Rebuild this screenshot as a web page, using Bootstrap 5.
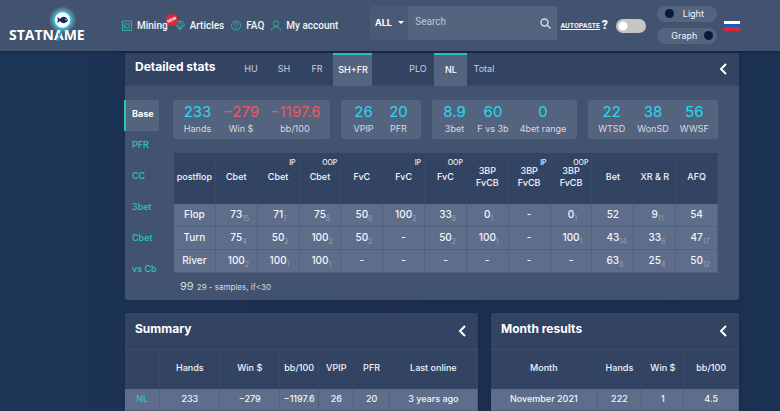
<!DOCTYPE html>
<html lang="en">
<head>
<meta charset="utf-8">
<meta name="viewport" content="width=device-width, initial-scale=1">
<title>Statname</title>
<link href="https://cdn.jsdelivr.net/npm/bootstrap@5.3.0/dist/css/bootstrap.min.css" rel="stylesheet">
<style>
body{font-family:Inter,"Liberation Sans",sans-serif;font-size:10px;line-height:14px;color:#f2f5fa;background:linear-gradient(90deg,#1c3557,#1e2f50 50%,#1a3253);overflow-x:hidden}
a{color:inherit;text-decoration:none}
button,input{font:inherit}
h2{font-size:12px;line-height:16px;font-weight:700;margin:0;color:#fff}
.topbar{height:51px;background:#42536f;box-shadow:0 1px 2px #14233f;padding-left:9px;padding-right:41px;position:relative;z-index:2}
.logo{width:80px;height:40px;margin-right:33px}
.logo text{font:700 14px "Open Sans",sans-serif;fill:#fff}
.topnav{gap:7px;font:500 10px/14px Roboto,sans-serif}
.topnav a{display:flex;align-items:center;gap:5px;white-space:nowrap}
.topnav svg{width:10px;height:11px;stroke:#2fae9f;fill:none;stroke-width:1}
.newtag{position:absolute;right:-10px;top:-5px;width:12px;height:12px;border-radius:50%;background:#d9293a;color:#fff;font:700 4px/12px Inter,sans-serif;text-align:center;transform:rotate(-25deg)}
.searchbox{margin-left:32px;width:187px;height:34px;margin-bottom:5px;border-radius:4px;background:#4a5a74}
.searchbox .pick{width:43px;border:0;background:none;color:#fff;font-weight:700;font-size:9px}
.searchbox .pick::after{margin-left:6px;vertical-align:2px;border-width:3px 3px 0}
.searchbox input{background:#54637e;border:0;color:#fff;padding:0 0 2px 7px;min-width:0;outline:0;font-family:Roboto,sans-serif}
.searchbox input::placeholder{color:#bdc7d7;opacity:1}
.searchbox .go{border:0;background:#54637e;width:28px;padding:0 0 2px;border-radius:0 2px 2px 0}
.autop{margin-left:3px;font:700 7px/10px "Roboto",sans-serif;white-space:nowrap}
.autop u{text-underline-offset:1px}
.autop b{font-size:12px;vertical-align:-1px}
.form-check-input.flip{width:30px;height:14px;margin:0 0 0 8px;border:0;background-color:#c6c5c4;background-image:radial-gradient(circle,#fff 4px,transparent 5px);background-size:12px 12px;background-position:1px center;background-repeat:no-repeat}
.pills{margin-left:11px;gap:6px;margin-bottom:2px}
.pills button{width:60px;height:16px;border:0;border-radius:8px;background:#54637e;color:#f2f5fa;font-size:9px;line-height:14px;padding:0 4px 0 8px}
.pills i{width:9px;height:9px;border-radius:50%;background:#0c1a38}
.flag{width:16px;height:10px;margin-left:7px;background:linear-gradient(#fff 33%,#1e5bb4 33% 60%,#dc2438 60%)}
main{padding:2px 41px 0 125px}
.panel{background:#42536f;border-radius:3px;box-shadow:0 0 4px #182a48}
.phead{background:#334463;height:33px;padding:0 12px 0 10px;border-bottom:1px solid #3a4b69}
.fold{border:0;background:none;padding:0;line-height:0}
.fold svg{width:8px;height:12px;fill:none;stroke:#fff;stroke-width:2}
.seg{font-size:9px;color:#c8d0dd;margin-left:19px}
.seg button{width:33px;height:33px;border:0;border-top:2px solid transparent;background:none;color:inherit;padding:0 0 3px;white-space:nowrap}
.seg button.on{background:#54637e;border-top-color:#2cc7b0;color:#fff;font-weight:500;padding-bottom:1px}
.seg .wide{width:39px;margin-right:29px}
.side{width:35px;margin:14px 0 0 -1px;font-size:9px;color:#2cc7b0;font-weight:500}
.side a{height:31px;padding:7px 0 0 8px;display:block;white-space:nowrap}
.side a.on{background:#54637e;color:#fff;font-weight:700;border-left:2px solid #2cc7b0;padding-left:6px}
.body-area{padding:14px 21px 0 15px}
.boxes{display:grid;grid-template-columns:157fr 80fr 145fr 130fr;gap:11px;margin:0 0 14px -1px}
.box{background:#54637e;border-radius:3px;height:39px;display:grid;text-align:center;color:#d5dbe5;font-size:9px;line-height:12px;white-space:nowrap;padding-top:3px}
.b1{grid-template-columns:49fr 38fr 70fr}
.b2{grid-template-columns:1fr 1fr;padding-left:5px;padding-right:5px}
.b3{grid-template-columns:45fr 32fr 68fr}
.b4{grid-template-columns:1fr 1fr 1fr;padding-left:3px;padding-right:3px}
.box b{display:block;font-weight:400;font-size:15px;line-height:18px;margin-bottom:2px;color:#27d9f0}
.box b.neg{color:#f2555e}
.grid{width:100%;table-layout:fixed;border-collapse:separate;border-spacing:0;text-align:center;font-size:9px;line-height:12px;font-weight:500}
.grid th,.grid td{padding:0;white-space:nowrap;vertical-align:middle}
.grid th{font-weight:500;background:#334463;border-right:1px solid #384967}
.grid td,.grid tbody th{background:#5d6d8a;border-right:1px solid #506180;border-bottom:1px solid #506180;height:23px}
.grid tbody td,.grid tbody th{font-size:10px}
.post thead th{height:51px;position:relative;padding-bottom:3px}
.post tbody td,.post tbody th{padding-bottom:2px}
.post sup{position:absolute;right:3px;top:5px;font-size:7px;line-height:9px}
.smp{position:relative}
.smp sub{position:absolute;left:100%;top:6px;font-size:7px;line-height:9px;color:#96a3b9;font-weight:400}
.legend{font-size:11px;color:#d5dbe5;padding:6px 0 5px 6px;line-height:15px}
.legend small{font-size:8px}
.lower{display:grid;grid-template-columns:353fr 248fr;gap:13px;margin-top:13px}
.phead2{background:#334463;height:37px;padding:0 12px 4px 10px;border-bottom:1px solid #3d4e6b;border-radius:3px 3px 0 0}
.phead2 .fold{padding-top:4px}
.lower thead th{height:39px;padding-bottom:3px}
.lower tbody td{height:22px;padding-bottom:2px;font-size:9px}
.nl{color:#2cc7b0}
</style>
<script src="https://cdn.jsdelivr.net/npm/bootstrap@5.3.0/dist/js/bootstrap.bundle.min.js"></script>
</head>
<body>
<header class="topbar d-flex align-items-center">
  <a href="#" class="logo flex-shrink-0" aria-label="Statname"><svg width="80" height="40" viewBox="0 0 80 40">
    <defs><radialGradient id="halo"><stop offset=".55" stop-color="#7fe6f5"/><stop offset="1" stop-color="#7fe6f5" stop-opacity="0"/></radialGradient></defs>
    <circle cx="53.500" cy="14" r="14" fill="url(#halo)" opacity=".6"/>
    <text x="0" y="34">STATNAME</text>
    <path d="M53 23l-4.500 12" stroke="#21a9cf" stroke-width="2"/>
    <circle cx="53.500" cy="14" r="8.500" fill="#fff" stroke="#29bfe0" stroke-width="1.500"/>
    <path d="M48 11l3 2c2-3 6-3 8 1-2 4-6 4-8 1l-3 2 1-3z" fill="#15285c"/><circle cx="57" cy="13.500" r=".7" fill="#fff"/>
  </svg></a>
  <nav class="topnav d-flex">
    <a href="#" class="position-relative"><svg viewBox="0 0 10 11"><path d="M.5 1h9v9.500h-9zM3 3v6M5 3v2M5 7v2M7 3v6M1 6h3"/></svg>Mining<span class="newtag">NEW</span></a>
    <a href="#"><svg viewBox="0 0 10 11"><path d="M2.500 1.500h5l2 3-4.500 5.500-4.500-5.500zM3 4.500l2 5 2-5-2-2z"/></svg>Articles</a>
    <a href="#"><svg viewBox="0 0 10 11"><circle cx="5" cy="5.500" r="4.500"/><path d="M3.500 4.500c0-2 3-2 3 0C6.500 5.500 5 5.500 5 7M5 8v1"/></svg>FAQ</a>
    <a href="#"><svg viewBox="0 0 10 11"><circle cx="5" cy="3.500" r="2.700"/><path d="M.5 10.500c0-5 9-5 9 0"/></svg>My account</a>
  </nav>
  <form class="searchbox d-flex flex-shrink-0">
    <button type="button" class="pick dropdown-toggle p-0">ALL</button>
    <input type="text" class="flex-grow-1" placeholder="Search" aria-label="Search">
    <button type="button" class="go" aria-label="Find"><svg width="11" height="11" viewBox="0 0 11 11" fill="none" stroke="#d5dbe5" stroke-width="1.400"><circle cx="4.500" cy="4.500" r="3.500"/><path d="M7 7l3.500 3.500"/></svg></button>
  </form>
  <label class="autop" for="autopaste"><u>AUTOPASTE</u> <b>?</b></label>
  <input class="form-check-input flip rounded-pill flex-shrink-0" type="checkbox" role="switch" id="autopaste">
  <div class="pills d-flex flex-column">
    <button type="button" class="d-flex align-items-center"><i></i><span class="flex-grow-1 text-center">Light</span></button>
    <button type="button" class="d-flex align-items-center"><span class="flex-grow-1 text-center">Graph</span><i></i></button>
  </div>
  <a href="#" class="flag flex-shrink-0" aria-label="Russian"></a>
</header>
<main>
  <section class="panel">
    <div class="phead d-flex align-items-center">
      <h2 class="pb-1">Detailed stats</h2>
      <div class="seg d-flex me-auto">
        <button type="button">HU</button><button type="button">SH</button><button type="button">FR</button><button type="button" class="on wide">SH+FR</button>
        <button type="button">PLO</button><button type="button" class="on">NL</button><button type="button">Total</button>
      </div>
      <button type="button" class="fold" aria-label="Collapse"><svg viewBox="0 0 8 12"><path d="M7 1L2 6l5 5"/></svg></button>
    </div>
    <div class="d-flex">
      <nav class="side flex-shrink-0"><a href="#" class="on">Base</a><a href="#">PFR</a><a href="#">CC</a><a href="#">3bet</a><a href="#">Cbet</a><a href="#">vs Cb</a></nav>
      <div class="body-area flex-grow-1">
        <div class="boxes">
          <div class="box b1"><div><b>233</b>Hands</div><div><b class="neg">−279</b>Win $</div><div><b class="neg">−1197.6</b>bb/100</div></div>
          <div class="box b2"><div><b>26</b>VPIP</div><div><b>20</b>PFR</div></div>
          <div class="box b3"><div><b>8.9</b>3bet</div><div><b>60</b>F vs 3b</div><div><b>0</b>4bet range</div></div>
          <div class="box b4"><div><b>22</b>WTSD</div><div><b>38</b>WonSD</div><div><b>56</b>WWSF</div></div>
        </div>
        <table class="grid post">
          <thead><tr><th>postflop</th><th>Cbet</th><th>Cbet<sup>IP</sup></th><th>Cbet<sup>OOP</sup></th><th>FvC</th><th>FvC<sup>IP</sup></th><th>FvC<sup>OOP</sup></th><th>3BP<br>FvCB</th><th>3BP<br>FvCB<sup>IP</sup></th><th>3BP<br>FvCB<sup>OOP</sup></th><th>Bet</th><th>XR &amp; R</th><th>AFQ</th></tr></thead>
          <tbody>
            <tr><th>Flop</th><td><span class="smp">73<sub>15</sub></span></td><td><span class="smp">71<sub>7</sub></span></td><td><span class="smp">75<sub>8</sub></span></td><td><span class="smp">50<sub>8</sub></span></td><td><span class="smp">100<sub>2</sub></span></td><td><span class="smp">33<sub>6</sub></span></td><td><span class="smp">0<sub>1</sub></span></td><td>-</td><td><span class="smp">0<sub>1</sub></span></td><td>52</td><td><span class="smp">9<sub>11</sub></span></td><td>54</td></tr>
            <tr><th>Turn</th><td><span class="smp">75<sub>4</sub></span></td><td><span class="smp">50<sub>2</sub></span></td><td><span class="smp">100<sub>2</sub></span></td><td><span class="smp">50<sub>2</sub></span></td><td>-</td><td><span class="smp">50<sub>2</sub></span></td><td><span class="smp">100<sub>1</sub></span></td><td>-</td><td><span class="smp">100<sub>1</sub></span></td><td><span class="smp">43<sub>14</sub></span></td><td><span class="smp">33<sub>6</sub></span></td><td><span class="smp">47<sub>17</sub></span></td></tr>
            <tr><th>River</th><td><span class="smp">100<sub>2</sub></span></td><td><span class="smp">100<sub>1</sub></span></td><td><span class="smp">100<sub>1</sub></span></td><td>-</td><td>-</td><td>-</td><td>-</td><td>-</td><td>-</td><td><span class="smp">63<sub>8</sub></span></td><td><span class="smp">25<sub>4</sub></span></td><td><span class="smp">50<sub>12</sub></span></td></tr>
          </tbody>
        </table>
        <div class="legend">99 <small>29 - samples, if&lt;30</small></div>
      </div>
    </div>
  </section>
  <div class="lower">
    <section class="panel">
      <div class="phead2 d-flex align-items-center justify-content-between"><h2>Summary</h2><button type="button" class="fold" aria-label="Collapse"><svg viewBox="0 0 8 12"><path d="M7 1L2 6l5 5"/></svg></button></div>
      <table class="grid">
        <colgroup><col style="width:10%"><col style="width:17%"><col style="width:17%"><col style="width:11%"><col style="width:10%"><col style="width:10%"><col></colgroup>
        <thead><tr><th></th><th>Hands</th><th>Win $</th><th>bb/100</th><th>VPIP</th><th>PFR</th><th>Last online</th></tr></thead>
        <tbody><tr><td><a href="#" class="nl">NL</a></td><td>233</td><td>−279</td><td>−1197.6</td><td>26</td><td>20</td><td>3 years ago</td></tr></tbody>
      </table>
    </section>
    <section class="panel">
      <div class="phead2 d-flex align-items-center justify-content-between"><h2>Month results</h2><button type="button" class="fold" aria-label="Collapse"><svg viewBox="0 0 8 12"><path d="M7 1L2 6l5 5"/></svg></button></div>
      <table class="grid">
        <colgroup><col style="width:43%"><col style="width:18%"><col style="width:17%"><col></colgroup>
        <thead><tr><th>Month</th><th>Hands</th><th>Win $</th><th>bb/100</th></tr></thead>
        <tbody><tr><td>November 2021</td><td>222</td><td>1</td><td>4.5</td></tr></tbody>
      </table>
    </section>
  </div>
</main>
</body>
</html>
